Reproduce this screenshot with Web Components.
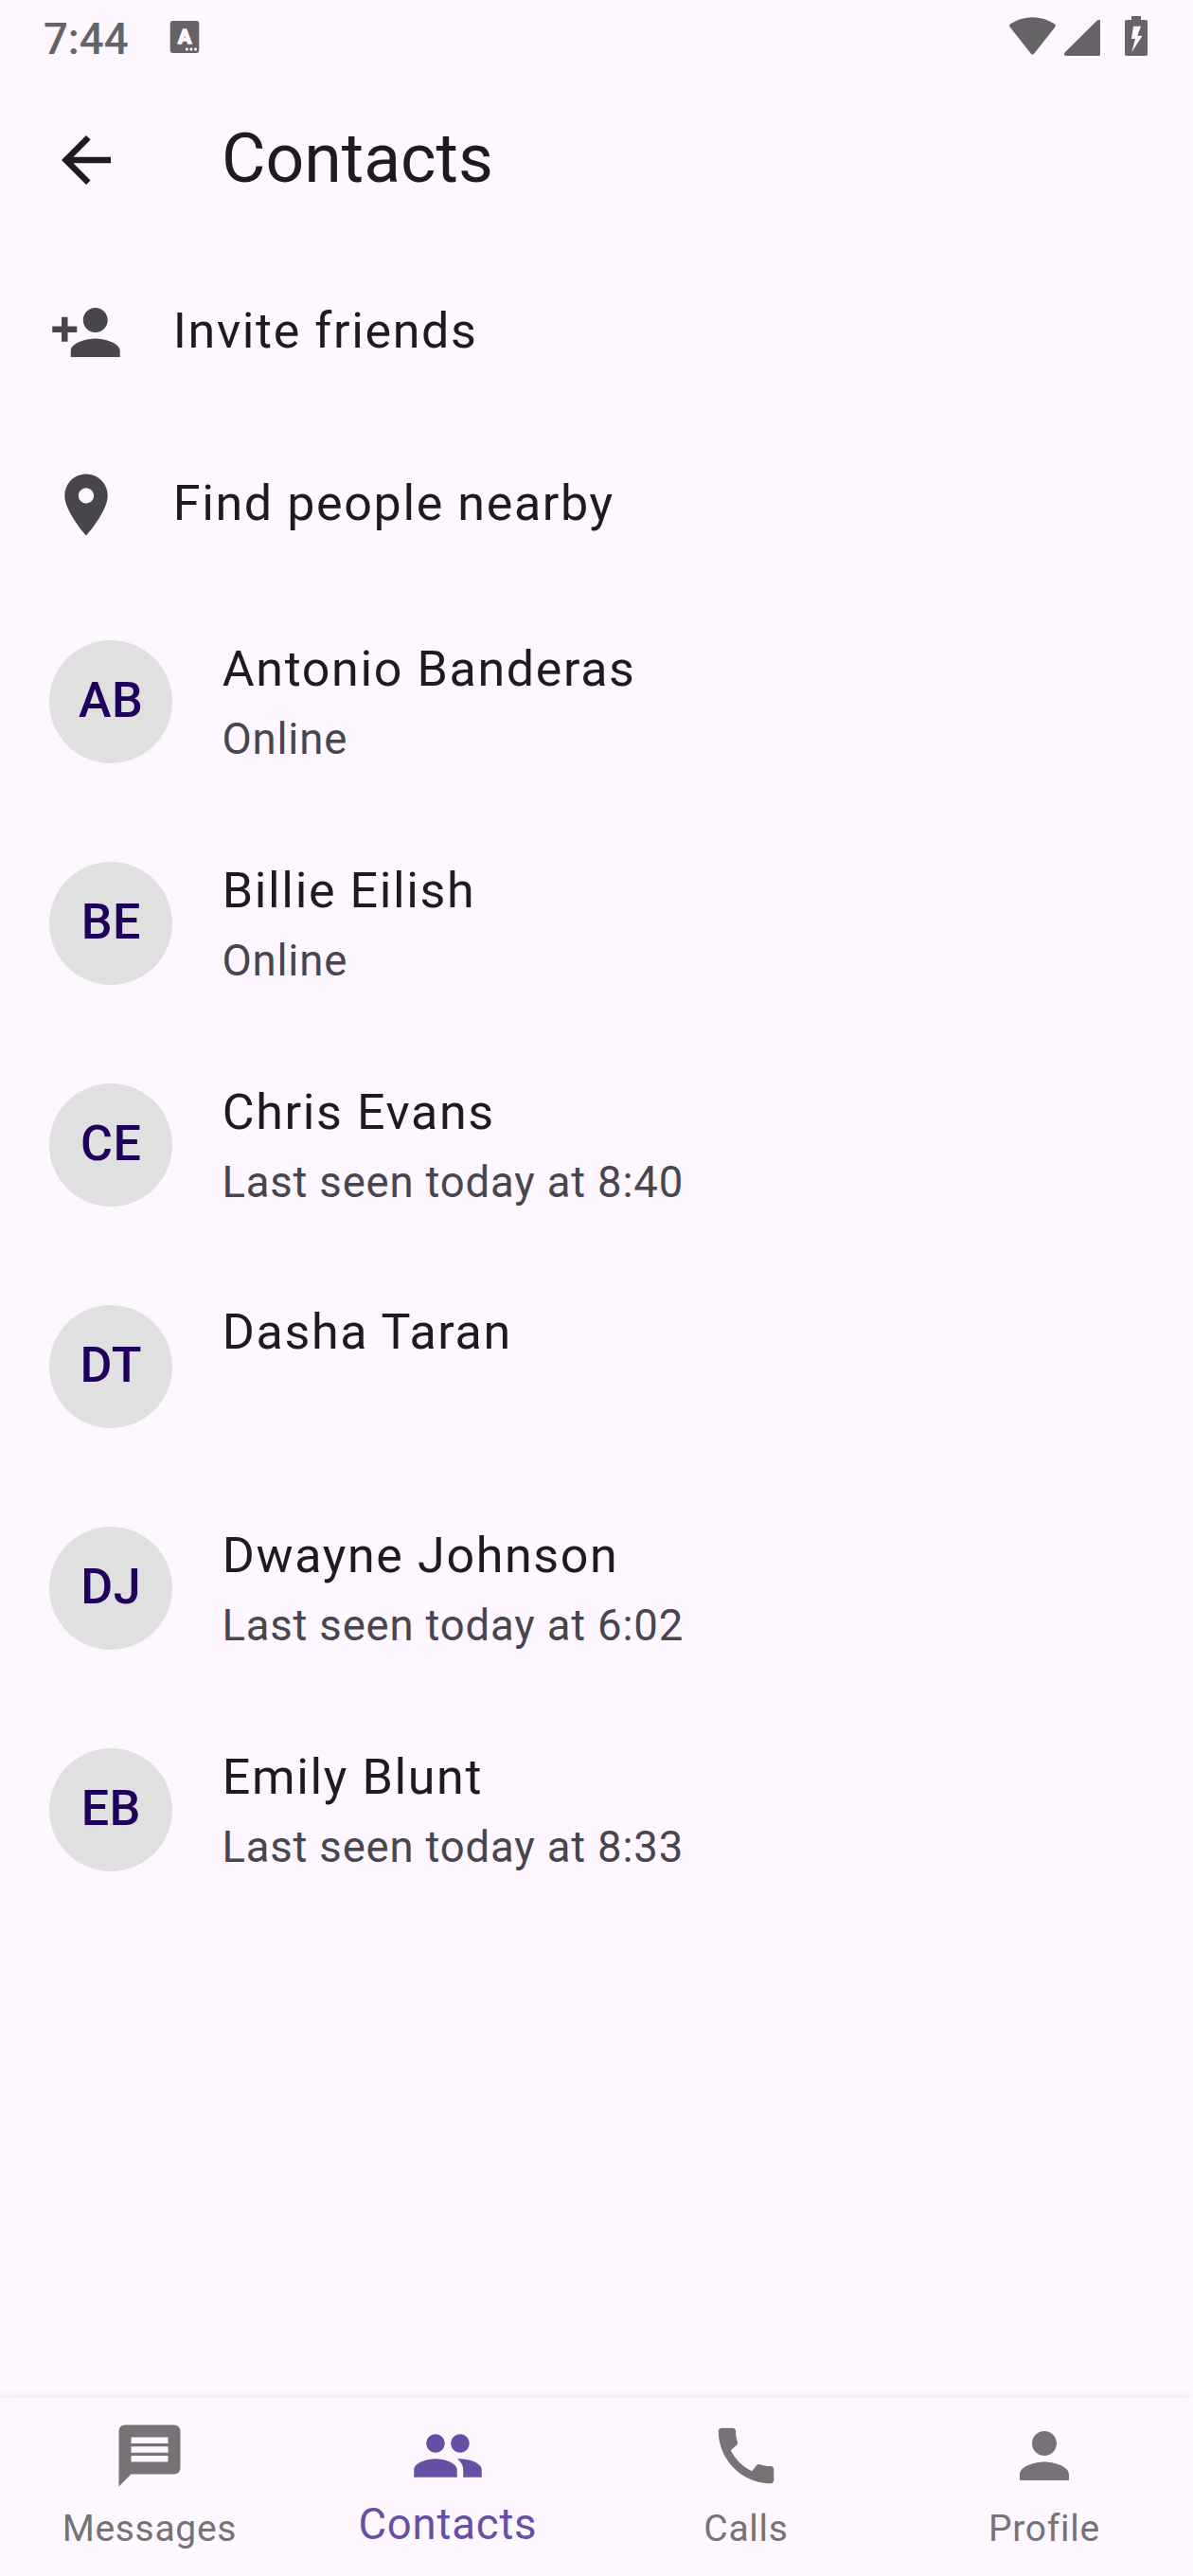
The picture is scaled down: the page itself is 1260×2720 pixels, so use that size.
<!DOCTYPE html>
<html lang="en">
<head>
<meta charset="utf-8">
<title>Contacts</title>
<style>
html,body{margin:0;padding:0;background:#fef7ff}
body{font-family:Roboto,"Liberation Sans",sans-serif;color:#1d1b20;width:1260px;height:2720px;overflow:hidden}
</style>
</head>
<body>
<contacts-app></contacts-app>
<script>
const ICONS = {
  back: '<path d="M20 11H7.83l5.59-5.59L12 4l-8 8 8 8 1.41-1.41L7.83 13H20v-2z"/>',
  invite: '<path d="M15 12c2.21 0 4-1.79 4-4s-1.79-4-4-4-4 1.79-4 4 1.79 4 4 4zm-9-2V7H4v3H1v2h3v3h2v-3h3v-2H6zm9 4c-2.67 0-8 1.34-8 4v2h16v-2c0-2.66-5.33-4-8-4z"/>',
  place: '<path d="M12 2C8.13 2 5 5.13 5 9c0 5.25 7 13 7 13s7-7.75 7-13c0-3.87-3.13-7-7-7zm0 9.500c-1.380 0-2.500-1.120-2.500-2.500s1.120-2.500 2.500-2.500 2.500 1.120 2.500 2.500-1.120 2.500-2.500 2.500z"/>',
  message: '<path d="M20 2H4c-1.100 0-1.990.9-1.990 2L2 22l4-4h14c1.100 0 2-.9 2-2V4c0-1.100-.9-2-2-2zm-2 12H6v-2h12v2zm0-3H6V9h12v2zm0-3H6V6h12v2z"/>',
  group: '<path d="M16 11c1.660 0 2.990-1.340 2.990-3S17.660 5 16 5c-1.660 0-3 1.340-3 3s1.340 3 3 3zm-8 0c1.660 0 2.990-1.340 2.990-3S9.660 5 8 5C6.340 5 5 6.340 5 8s1.340 3 3 3zm0 2c-2.330 0-7 1.170-7 3.500V19h14v-2.500c0-2.330-4.670-3.500-7-3.500zm8 0c-.29 0-.62.02-.97.05 1.160.84 1.970 1.970 1.970 3.450V19h6v-2.500c0-2.330-4.670-3.500-7-3.500z"/>',
  call: '<path d="M20.010 15.380c-1.230 0-2.420-.2-3.530-.56-.35-.12-.74-.03-1.010.24l-1.570 1.970c-2.830-1.350-5.480-3.900-6.890-6.830l1.950-1.660c.27-.28.35-.67.24-1.020-.37-1.110-.56-2.300-.56-3.530 0-.54-.45-.99-.99-.99H4.190C3.650 3 3 3.240 3 3.990 3 13.280 10.730 21 20.010 21c.71 0 .99-.63.99-1.180v-3.450c0-.54-.45-.99-.99-.99z"/>',
  person: '<path d="M12 12c2.210 0 4-1.790 4-4s-1.790-4-4-4-4 1.790-4 4 1.790 4 4 4zm0 2c-2.670 0-8 1.340-8 4v2h16v-2c0-2.660-5.330-4-8-4z"/>'
};
function define(name, render){
  customElements.define(name, class extends HTMLElement{
    connectedCallback(){
      if(this.shadowRoot) return;
      this.attachShadow({mode:'open'}).innerHTML = render(this);
    }
  });
}

define('m-icon', el => `<style>:host{display:block;width:78px;height:78px;flex:none}svg{display:block;width:78px;height:78px;fill:currentColor}</style>
<svg viewBox="0 0 24 24" aria-hidden="true">${ICONS[el.getAttribute('name')]}</svg>`);

define('status-bar', () => `<style>
:host{display:flex;height:78px;box-sizing:border-box;color:#666367;padding-left:46px}
.time{font-size:45.5px;font-weight:500;line-height:54px;padding-top:15px;width:133px;box-sizing:border-box}
svg{display:block;flex:none}
.right{margin-left:auto}
</style>
<span class="time">7:44</span>
<svg width="32" height="78" viewBox="179 0 32 78"><rect x="179.700" y="22" width="30.600" height="34" rx="3" fill="currentColor"/>
<text x="195" y="46" text-anchor="middle" font-family="Roboto" font-weight="700" font-size="21" fill="#fef7ff" stroke="#fef7ff" stroke-width="1.600" stroke-linejoin="round">A</text>
<g fill="#fef7ff"><rect x="196" y="50.500" width="2.700" height="3" rx=".8"/><rect x="200.600" y="50.500" width="2.700" height="3" rx=".8"/><rect x="205.200" y="50.500" width="2.700" height="3" rx=".8"/></g></svg>
<svg class="right" width="200" height="78" viewBox="1060 0 200 78" fill="currentColor">
<path d="M1067 29Q1065.200 27 1067.200 25.300Q1078 18.300 1090.500 18.300Q1103 18.300 1113.800 25.300Q1115.800 27 1114 29L1092.300 56.400Q1090.500 58.400 1088.700 56.400Z"/>
<path d="M1158.800 21.600Q1160 20.700 1162 21V57.500Q1162 59 1160.500 59H1125.800Q1124 59 1124 57.200Q1124 56 1125 55Z"/>
<path fill-rule="evenodd" d="M1195 17H1205V21H1210Q1212 21 1212 23V57Q1212 59 1210 59H1190Q1188 59 1188 57V23Q1188 21 1190 21H1195ZM1197 27.700L1195 41H1199L1195.300 55L1206.500 37.700H1201.300L1205 27.700Z"/>
</svg>`);

define('app-bar', () => `<style>
:host{display:flex;align-items:center;height:182px;padding-left:52px;box-sizing:border-box}
h1{margin:0;font-weight:400;font-size:71.500px;line-height:84px;padding:0 0 2px 104px}
</style><m-icon name="back"></m-icon><h1><slot></slot></h1>`);

define('action-tile', el => `<style>
:host{display:flex;align-items:center;height:182px;padding-left:52px;gap:52.8px;box-sizing:border-box}
m-icon{color:#49454f}
span{font-size:52px;letter-spacing:1.625px;line-height:78px;padding-bottom:3px}
</style><m-icon name="${el.getAttribute('icon')}"></m-icon><span><slot></slot></span>`);

define('user-avatar', () => `<style>
:host{display:flex;align-items:center;justify-content:center;width:130px;height:130px;border-radius:50%;background:#e0e0e0;color:#21005d;flex:none}
span{font-size:52px;font-weight:500;letter-spacing:.4875px;line-height:78px;padding:0 0 3px .5px}
</style><span><slot></slot></span>`);

define('contact-tile', el => `<style>
:host{display:flex;height:234px;padding:52px 52px 0;gap:52px;box-sizing:border-box}
.name{font-size:52px;letter-spacing:1.625px;line-height:60px;padding-left:.8px;margin-top:${el.hasAttribute('status')?1:-1}px}
.sub{font-size:45.500px;letter-spacing:.8125px;line-height:60px;padding-left:.4px;margin-top:14px;color:#49454f}
</style><user-avatar>${el.getAttribute('initials')}</user-avatar>
<div><div class="name"><slot></slot></div>${el.hasAttribute('status')?`<div class="sub">${el.getAttribute('status')}</div>`:''}</div>`);

define('nav-item', el => { const on = el.hasAttribute('selected'); return `<style>
:host{display:flex;flex-direction:column;align-items:center;flex:1;padding-top:21.500px;color:${on?'#6750a4':'#767276'}}
span{font-size:${on?45.5:39}px;letter-spacing:${on?.8125:.7}px;line-height:54px;padding-left:.8px;margin-top:${on?7:11}px}
</style><m-icon name="${el.getAttribute('icon')}"></m-icon><span><slot></slot></span>`;});

define('bottom-nav', () => `<style>
:host{display:flex;height:188px;background:#fef7ff;box-shadow:0 -1px 12px rgba(0,0,0,.065)}
</style><slot></slot>`);

define('contacts-app', () => `<style>
:host{display:flex;flex-direction:column;width:1260px;height:2720px;background:#fef7ff}
main{flex:1}
</style>
<status-bar></status-bar>
<app-bar>Contacts</app-bar>
<main>
<action-tile icon="invite">Invite friends</action-tile>
<action-tile icon="place">Find people nearby</action-tile>
<contact-tile initials="AB" status="Online">Antonio Banderas</contact-tile>
<contact-tile initials="BE" status="Online">Billie Eilish</contact-tile>
<contact-tile initials="CE" status="Last seen today at 8:40">Chris Evans</contact-tile>
<contact-tile initials="DT">Dasha Taran</contact-tile>
<contact-tile initials="DJ" status="Last seen today at 6:02">Dwayne Johnson</contact-tile>
<contact-tile initials="EB" status="Last seen today at 8:33">Emily Blunt</contact-tile>
</main>
<bottom-nav>
<nav-item icon="message">Messages</nav-item>
<nav-item icon="group" selected>Contacts</nav-item>
<nav-item icon="call">Calls</nav-item>
<nav-item icon="person">Profile</nav-item>
</bottom-nav>`);
</script>
</body>
</html>
